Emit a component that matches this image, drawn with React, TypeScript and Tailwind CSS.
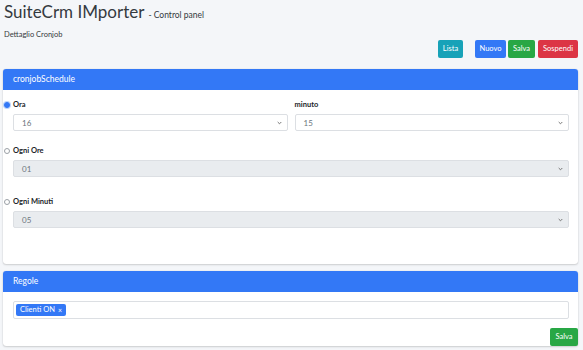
import React from "react";

const Chevron = () => (
  <svg width="5" height="4" viewBox="0 0 5 4" className="shrink-0">
    <path d="M0.7 1 L2.5 2.8 L4.3 1" fill="none" stroke="#666" strokeWidth="0.9" />
  </svg>
);

const Select = ({ value, disabled }: { value: string; disabled?: boolean }) => (
  <div
    className={`h-[17px] w-full flex items-center justify-between pl-[8px] pr-[5px] border border-[#dcdfe3] rounded-[2px] text-[8px] text-[#6c757d] ${
      disabled ? "bg-[#e9ecef]" : "bg-white"
    }`}
  >
    <span>{value}</span>
    <Chevron />
  </div>
);

const Radio = ({ checked }: { checked?: boolean }) => (
  <span
    className={`w-[6px] h-[6px] rounded-full border shrink-0 ${
      checked ? "border-[#3378f6] bg-[#3378f6] shadow-[0_0_0_1px_#bcd4fb]" : "border-[#9aa0a6] bg-white"
    }`}
  />
);

const RadioLabel = ({ label, checked }: { label: string; checked?: boolean }) => (
  <div className="-ml-[9px] flex items-center gap-[3px] h-[8px] text-[7.5px] font-bold">
    <Radio checked={checked} />
    <span>{label}</span>
  </div>
);

export default function App() {
  return (
    <div
      className="w-full h-[350px] overflow-hidden bg-[#f4f6f9] pl-[3px] pr-[5px] text-[#212529]"
      style={{ fontFamily: "Lato, 'Noto Sans', sans-serif" }}
    >
      <div className="pt-[2px] pl-[1px] flex items-baseline">
        <span className="text-[17px] leading-[20px] text-[#343a40]">SuiteCrm IMporter</span>
        <span className="text-[8.5px] ml-[4px] text-[#343a40]">- Control panel</span>
      </div>
      <div className="pl-[1px] mt-[8px] text-[7.5px] leading-[9px] text-[#343a40]">Dettaglio Cronjob</div>

      <div className="flex justify-end mt-[1px] text-[7.5px] text-white">
        <div className="h-[18px] w-[25px] flex items-center justify-center rounded-[2px] bg-[#17a2b8]">Lista</div>
        <div className="h-[18px] w-[31px] ml-[12px] flex items-center justify-center rounded-[2px] bg-[#3378f6]">Nuovo</div>
        <div className="h-[18px] w-[27px] ml-[2px] flex items-center justify-center rounded-[2px] bg-[#28a745]">Salva</div>
        <div className="h-[18px] w-[40px] ml-[3px] flex items-center justify-center rounded-[2px] bg-[#dc3545]">Sospendi</div>
      </div>

      <div className="mt-[11px] bg-white rounded-[3px] shadow-[0_0_1px_rgba(0,0,0,0.2),0_1px_2px_rgba(0,0,0,0.15)]">
        <div className="h-[21px] bg-[#3378f6] rounded-t-[3px] flex items-center pl-[10px] text-[8.5px] text-white">
          cronjobSchedule
        </div>
        <div className="pt-[11px] pb-[36px] pl-[10px] pr-[9px]">
          <div className="grid grid-cols-2 gap-[7px]">
            <div>
              <RadioLabel label="Ora" checked />
              <div className="mt-[5px]">
                <Select value="16" />
              </div>
            </div>
            <div>
              <div className="flex items-center h-[8px] text-[7.5px] font-bold">minuto</div>
              <div className="mt-[5px]">
                <Select value="15" />
              </div>
            </div>
          </div>

          <div className="mt-[16px]">
            <RadioLabel label="Ogni Ore" />
          </div>
          <div className="mt-[5px]">
            <Select value="01" disabled />
          </div>

          <div className="mt-[21px]">
            <RadioLabel label="Ogni Minuti" />
          </div>
          <div className="mt-[5px]">
            <Select value="05" disabled />
          </div>
        </div>
      </div>

      <div className="mt-[7px] bg-white rounded-[3px] shadow-[0_0_1px_rgba(0,0,0,0.2),0_1px_2px_rgba(0,0,0,0.15)]">
        <div className="h-[21px] bg-[#3378f6] rounded-t-[3px] flex items-center pl-[10px] text-[8.5px] text-white">
          Regole
        </div>
        <div className="pt-[9px] pl-[10px] pr-[9px]">
          <div className="h-[18px] border border-[#dcdfe3] rounded-[2px] flex items-center pl-[2px]">
            <div className="h-[12px] px-[4px] flex items-center gap-[3px] rounded-[2px] bg-[#3378f6] text-white text-[7.5px]">
              <span>Clienti ON</span>
              <span className="text-[7px]">×</span>
            </div>
          </div>
        </div>
        <div className="flex justify-end mt-[9px]">
          <div className="h-[18px] w-[28px] flex items-center justify-center rounded-[2px] bg-[#28a745] text-white text-[7.5px]">
            Salva
          </div>
        </div>
      </div>
    </div>
  );
}
